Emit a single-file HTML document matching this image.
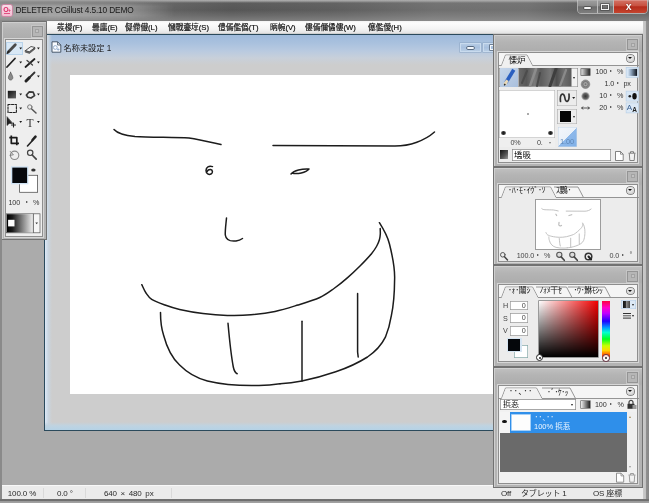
<!DOCTYPE html>
<html lang="ja">
<head>
<meta charset="utf-8">
<title>DELETER CGillust 4.5.10 DEMO</title>
<style>
html,body{margin:0;padding:0;}
body{will-change:transform;width:649px;height:503px;overflow:hidden;position:relative;background:#ababab;
 font-family:"Liberation Sans","Noto Sans CJK JP","Noto Sans CJK SC",sans-serif;font-size:8px;color:#222;}
.a{position:absolute;}
.t{position:absolute;white-space:nowrap;line-height:10px;}
/* window chrome */
#titlebar{left:0;top:0;width:649px;height:20.500px;
 background:linear-gradient(100deg,rgba(150,150,150,.55) 0,rgba(140,140,140,.35) 120px,rgba(120,120,120,0) 230px,rgba(150,150,150,.12) 330px,rgba(165,165,165,.32) 430px,rgba(165,165,165,.34) 520px,rgba(140,140,140,.15) 580px,rgba(140,140,140,.2) 649px),linear-gradient(180deg,#b6b6b6 0px,#8e8e8e 1.5px,#5c5c5c 3px,#565656 10px,#6a6a6a 16px,#7c7c7c 20.500px);}
#titleglow{left:0px;top:1.500px;width:200px;height:18px;
 background:linear-gradient(180deg,rgba(120,120,120,.0) 0,rgba(255,255,255,0) 20%,rgba(255,255,255,0) 80%,rgba(120,120,120,.0) 100%),linear-gradient(90deg,rgba(205,205,205,.42) 0,rgba(208,208,208,.5) 60px,rgba(205,205,205,.42) 125px,rgba(190,190,190,0) 175px);
 -webkit-mask-image:linear-gradient(180deg,rgba(0,0,0,.2) 0,#000 25%,#000 75%,rgba(0,0,0,.3) 100%);mask-image:linear-gradient(180deg,rgba(0,0,0,.2) 0,#000 25%,#000 75%,rgba(0,0,0,.3) 100%);}
#frameL{left:0;top:21px;width:2px;height:482px;background:#8a8a8a;}
#frameR{left:642.500px;top:20.500px;width:6.500px;height:483px;background:linear-gradient(90deg,#cacaca 0,#c2c2c2 2.500px,#8f8f8f 3.300px,#868686 6.500px);}
#frameB{left:0;top:499px;width:649px;height:4px;background:linear-gradient(180deg,#727272 0,#6e6e6e 1.800px,#9a9a9a 2.400px,#a4a4a4 4px);}
#menubar{left:2px;top:20.500px;width:640.500px;height:13.500px;background:linear-gradient(180deg,#f2f2f2 0,#fdfdfd 2px,#f4f4f4 8px,#e4e4e4 12px,#a8a8a8 13.500px);}
#menubar .t{top:2px;font-size:7.700px;color:#0a0a0a;-webkit-text-stroke:.2px #222;}
#statusbar{left:2px;top:485px;width:642px;height:14px;background:#ebebeb;border-top:1px solid #f8f8f8;box-sizing:border-box;}
#statusbar .t{top:2.500px;color:#2a2a2a;font-size:8px;letter-spacing:-.15px;}
.sep{position:absolute;top:2px;width:1px;height:10px;background:#d9d9d9;}
/* document window */
#doc{left:44px;top:34px;width:460px;height:397px;box-sizing:border-box;border:1px solid #2b4a5c;background:#cdcdcd;}
#doctitle{left:0;top:0;width:458px;height:40px;background:linear-gradient(180deg,#9fbadb 0,#a9c1de 8px,#b9cae0 16px,#c8d0da 23px,#cdcdcd 30px);}
#docL{left:0;top:0;width:7px;height:395px;background:linear-gradient(90deg,#dfeaf6 0,#d3e0ee 1.500px,#cad5df 3.500px,rgba(205,205,205,0) 7px);}
#docB{left:0;top:387px;width:458px;height:8px;background:linear-gradient(180deg,rgba(205,205,205,0) 0,#c0d3e0 45%,#b5d2e6 100%);}
#canvas{left:25px;top:39.800px;width:430px;height:319px;background:#fff;}
/* floating panels */
.panel{position:absolute;box-sizing:border-box;background:linear-gradient(180deg,#c2c2c2 0,#b4b4b4 8px,#adadad 17px,#b3b3b3 19px,#b3b3b3 100%);box-shadow:inset 0 0 0 1px #727272, inset 1px 1px 0 1px #cfcfcf;}
.pbtn{position:absolute;width:11px;height:11px;border:1px solid #949494;box-shadow:0 0 0 1px #c6c6c6;background:#b6b6b6;box-sizing:border-box;}
.pbtn:after{content:"";position:absolute;left:2.500px;top:2.500px;width:4px;height:4px;border:1px solid #a2a2a2;background:#c2c2c2;box-sizing:border-box;}
.inner{position:absolute;box-sizing:border-box;background:#ececec;box-shadow:inset 0 0 0 1px #8e8e8e, 0 0 0 1px #d6d6d6;}
.tabs{position:absolute;left:1px;top:1px;height:12.5px;background:#f5f5f5;}
.num{position:absolute;white-space:nowrap;line-height:10px;font-size:7.200px;color:#333;letter-spacing:-.15px;}
.r{text-align:right;}
.tri{position:absolute;width:0;height:0;border-left:2.5px solid #333;border-top:1.75px solid transparent;border-bottom:1.75px solid transparent;}
.dd{position:absolute;width:0;height:0;border-top:2.2px solid #222;border-left:1.8px solid transparent;border-right:1.8px solid transparent;}
.circ{position:absolute;width:6.500px;height:6.500px;border-radius:50%;background:radial-gradient(circle at 45% 40%,#f2f2f2 0,#d8d8d8 60%,#9c9c9c 100%);box-shadow:0 0 0 .8px #666;}
.circ:after{content:"";position:absolute;left:1.250px;top:2.200px;width:0;height:0;border-top:2.600px solid #0a0a0a;border-left:2px solid transparent;border-right:2px solid transparent;}
.box{position:absolute;box-sizing:border-box;}

</style>
</head>
<body>
<div id="titlebar" class="a"></div>
<div id="titleglow" class="a"></div>
<div class="t" style="left:15.500px;top:4px;font-size:8.300px;line-height:12px;color:#1a1a1a;letter-spacing:-0.15px;">DELETER CGillust 4.5.10 DEMO</div>
<!-- app icon -->
<div class="a" style="left:2.300px;top:5px;width:9.500px;height:10.500px;border-radius:1.500px;background:linear-gradient(180deg,#f8dce8,#f4bcd2);box-shadow:0 0 0 .7px #e080a8;"></div>
<div class="t" style="left:3.300px;top:4.500px;font-size:7px;line-height:10px;color:#dc2864;font-weight:bold;letter-spacing:-.6px;">O<span style="font-size:4.500px;">+</span></div>
<div class="a" style="left:3.800px;top:13px;width:6.500px;height:1.300px;background:#e0507f;"></div>
<!-- window buttons -->
<div class="a" style="left:578px;top:0;width:68.500px;height:13px;border-radius:0 0 3.500px 3.500px;box-shadow:0 0 0 1px rgba(205,205,205,.7);overflow:hidden;">
 <div class="a" style="left:0;top:0;width:19.500px;height:13px;background:linear-gradient(180deg,#b4b4b4 0,#9a9a9a 1.500px,#8a8a8a 45%,#6c6c6c 52%,#7e7e7e 100%);border-right:1px solid #bcbcbc;box-sizing:border-box;"></div>
 <div class="a" style="left:19.500px;top:0;width:16px;height:13px;background:linear-gradient(180deg,#b4b4b4 0,#9a9a9a 1.500px,#8a8a8a 45%,#6c6c6c 52%,#7e7e7e 100%);border-right:1px solid #bcbcbc;box-sizing:border-box;"></div>
 <div class="a" style="left:35.500px;top:0;width:33px;height:13px;background:linear-gradient(180deg,#e0a098 0,#d06a5c 1.500px,#c8503f 45%,#b52b1b 52%,#c5452f 100%);"></div>
 <div class="a" style="left:5.500px;top:7px;width:7px;height:2.400px;background:#f4f4f4;border-radius:1px;box-shadow:0 0 0 .7px #4a4a4a;"></div>
 <div class="a" style="left:22.800px;top:4px;width:8px;height:6px;border:1.600px solid #f2f2f2;box-sizing:border-box;box-shadow:0 0 0 .7px #4a4a4a, inset 0 0 0 .6px #4a4a4a;"></div>
 <div class="t" style="left:47.800px;top:.5px;font-size:10.500px;line-height:11px;font-weight:bold;color:#fff;text-shadow:0 0 1.500px #501008;">x</div>
</div>
</div>

<div id="menubar" class="a">
 <div class="t" style="left:55px;">彂椶(F)</div>
 <div class="t" style="left:90px;">曇廤(E)</div>
 <div class="t" style="left:123px;">儗僀儎(L)</div>
 <div class="t" style="left:166px;">慖戰斖埻(S)</div>
 <div class="t" style="left:216px;">僼傿儖僞(T)</div>
 <div class="t" style="left:268px;">昞帵(V)</div>
 <div class="t" style="left:303px;">僂傿儞僪僂(W)</div>
 <div class="t" style="left:366px;">僿儖僾(H)</div>
</div>

<div id="doc" class="a">
 <div id="doctitle" class="a"></div>
 <div id="docL" class="a"></div>
 <div id="docB" class="a"></div>
 <div id="canvas" class="a"></div>
 <!-- doc icon -->
 <svg class="a" style="left:5.500px;top:6px;" width="11" height="12" viewBox="0 0 11 12">
  <path d="M1,.8 H6.600 L9.800,4 V11.200 H1 Z" fill="#f8fbff" stroke="#3a4a5c" stroke-width=".9"/>
  <path d="M6.600,.8 V4 H9.800" fill="none" stroke="#3a4a5c" stroke-width=".8"/>
  <circle cx="4.300" cy="6.500" r="1.900" fill="none" stroke="#8fa8c8" stroke-width=".9"/>
  <path d="M6,8.500 h2.500 M7.200,7.300 v2.500" stroke="#8fa8c8" stroke-width=".8"/>
 </svg>
 <!-- doc buttons -->
 <div class="a" style="left:415px;top:7.500px;width:20.500px;height:9.500px;box-sizing:border-box;border:1px solid #c9dbee;background:linear-gradient(180deg,#b5cbe4,#a8c0de 50%,#b8cde4);box-shadow:0 0 0 .6px #8fa8c6;"></div>
 <div class="a" style="left:422px;top:11.500px;width:7px;height:2.500px;background:#f4f8fc;border-radius:1px;box-shadow:0 0 0 .7px #3c4c60;"></div>
 <div class="a" style="left:438px;top:7.500px;width:20.500px;height:9.500px;box-sizing:border-box;border:1px solid #c9dbee;background:linear-gradient(180deg,#b5cbe4,#a8c0de 50%,#b8cde4);box-shadow:0 0 0 .6px #8fa8c6;"></div>
 <div class="a" style="left:444.500px;top:9.500px;width:7px;height:5.500px;box-sizing:border-box;border:1.300px solid #f4f8fc;box-shadow:0 0 0 .6px #3c4c60;"></div>
 <div class="t" style="left:18.500px;top:8px;font-size:8.200px;line-height:11px;color:#1c1c1c;">名称未設定 1</div>
</div>


<svg class="a" style="left:0;top:0;" width="649" height="503" viewBox="0 0 649 503" fill="none" stroke="#1c1c1c" stroke-width="1.500" stroke-linecap="round" stroke-linejoin="round">
 <path d="M114,129.5 C118,134 125,135.5 135,136.5 C150,137.6 175,137 189,138 C200,139.5 212,142.5 221,144.5"/>
 <path d="M273,145.5 L395,146 C410,146 425,140.5 434.5,132"/>
 <path d="M212.5,166.6 C209,165.5 206,167 206,170.5 C206,174 209,175 211,174 C213,173 213,170 210.5,169.6 C209,169.5 207.5,170.5 207,171.6"/>
 <path d="M291,174 C294,170.5 302,168.5 309,169 C306,172.6 297,174.5 292,173"/>
 <path d="M226.5,218 C226,224 225,230 225.3,235 C226,240 231,241.5 236,241 C239,240.5 241,239.5 242.5,238.5"/>
 <path d="M141.8,284.7 C142.5,286.1 144.3,290.6 146.0,293.0 C147.7,295.4 148.5,297.4 151.7,299.4 C154.9,301.4 160.3,303.3 165.0,305.0 C169.7,306.7 173.3,308.0 179.6,309.4 C185.9,310.8 195.1,312.5 203.0,313.5 C210.9,314.5 219.3,315.2 227.3,315.4 C235.3,315.6 243.1,315.5 251.0,314.8 C258.9,314.1 267.2,313.0 275.0,311.4 C282.8,309.8 290.5,307.3 298.0,305.0 C305.5,302.7 313.8,300.2 319.8,297.5 C325.8,294.8 329.4,291.8 334.0,288.5 C338.6,285.2 343.3,281.4 347.6,277.6 C351.9,273.9 356.0,270.0 360.0,266.0 C364.0,262.0 368.8,256.9 371.5,253.7 C374.2,250.4 375.2,248.8 376.5,246.5 C377.8,244.2 378.8,241.9 379.4,239.8 C380.0,237.7 380.2,235.9 380.3,234.0 C380.4,232.1 380.2,229.5 380.2,228.6"/>
 <path d="M379.4,222.7 C384,230 388,238 389.4,243.8 C393,258 395,270 394.6,279.6 C394.5,295 393,308 391.4,315.4 C390,324 388,331 385.4,337.2 C381,346 375,352 367.5,357 C358,363 347,368 335.7,371.8 C325,375.5 312,379 301.9,381 C295,382.5 287,383.5 280,383.8"/>
 <path d="M160.5,312.6 C160.5,322 161.5,329 163.6,335.2 C167,348 172,358 179.6,365 C187,372.5 196,378 207.4,381 C222,384.5 240,386 259,385.5 C268,385.3 275,384.5 280,383.8"/>
 <path d="M228,323.3 C229.5,340 231,355 233.3,367 C234,370.5 235.5,373 237.2,373.8"/>
 <path d="M302,321.3 L302,381"/>
 <path d="M357.6,293.5 L357.6,352 L358.2,357"/>
</svg>

<div id="statusbar" class="a">
 <div class="t" style="left:5.800px;">100.0 %</div>
 <div class="sep" style="left:41px;"></div>
 <div class="t" style="left:55px;">0.0 °</div>
 <div class="sep" style="left:83px;"></div>
 <div class="t" style="left:102px;word-spacing:1.600px;">640 × 480 px</div>
 <div class="sep" style="left:168.500px;"></div>
 <div class="t" style="left:499px;">Off</div>
 <div class="t" style="left:519px;">タブレット 1</div>
 <div class="t" style="left:591px;">OS 座標</div>
</div>


<!-- TOOL PANEL -->
<div class="panel" style="left:1px;top:21px;width:45.5px;height:219px;">
 <div class="pbtn" style="left:30.5px;top:4.5px;"></div>
 <div class="inner" style="left:3.5px;top:18px;width:38.5px;height:197.5px;background:#eeeeee;">
  <div class="box" style="left:1.5px;top:2.5px;width:17px;height:13.5px;background:#d9e8f5;box-shadow:inset 0 0 0 1px #b9d3ea;"></div>
 </div>
 <svg class="a" style="left:0;top:0;" width="46" height="219" viewBox="1 21 46 219">
  <g stroke="#222" fill="none" stroke-linecap="round" stroke-linejoin="round">
   <!-- row1 pen / eraser -->
   <path d="M8.300,52 L15.300,44.800" stroke-width="2.800" stroke="#4a4a4a"/><path d="M7.200,53.200 L9,51.300" stroke-width="1.400" stroke="#222"/>
   
   <path d="M25.5,50.5 L31,46.5 L35,47.5 L29.5,51.8 Z" fill="#f4f4f4" stroke="#444" stroke-width=".9"/>
   <path d="M25.500,50.500 L29.500,51.800 L35,47.500 L35,49 L29.500,53.400 L25.500,52.200 Z" fill="#666" stroke="#444" stroke-width=".6"/>
   <!-- row2 line / airbrush -->
   <path d="M7,67 L15,58.5" stroke-width="1.8" stroke="#222"/>
   <path d="M25.5,67 L34.5,59" stroke-width="1.8" stroke="#222"/>
   <path d="M27,60.5 L32.5,65" stroke-width="1.3" stroke="#444"/>
   <!-- row3 drop / brush -->
   <path d="M10.600,72.300 C9.400,74.800 8.400,76.300 8.400,77.600 C8.400,79.100 9.400,80 10.600,80 C11.800,80 12.800,79.100 12.800,77.600 C12.800,76.300 11.800,74.800 10.600,72.300 Z" fill="#8a8a8a" stroke="#555" stroke-width=".7"/>
   <path d="M26,81 L29.5,77.5" stroke-width="3" stroke="#222"/>
   <path d="M30,77 L34.5,72.5" stroke-width="1.8" stroke="#333"/>
   <!-- row5 marquee / wand -->
   <rect x="8" y="104.500" width="8.400" height="8" stroke="#222" stroke-width="1.100" stroke-dasharray="2.200 1.300"/>
   <circle cx="29.800" cy="107" r="2.200" stroke="#777" stroke-width="1"/>
   <path d="M31.700,109 L36,113" stroke-width="1.500" stroke="#555"/>
   <!-- row6 move -->
   <path d="M7,117 L7,125.5 L9.2,123.4 L12.5,123.4 Z" fill="#222" stroke="#222" stroke-width=".6"/>
   <path d="M13.5,123 L13.5,127 M11.5,125 L15.5,125" stroke-width="1.1"/>
   <!-- row7 crop / eyedropper -->
   <path d="M11.300,135.500 L11.300,143.300 L19,143.300 M9.300,137.600 L16.800,137.600 L16.800,145.300" stroke-width="1.700" stroke="#1a1a1a" stroke-linecap="butt"/>
   <path d="M27.5,146 L32.5,140.5" stroke-width="1.6" stroke="#222"/>
   <path d="M32.5,140 L35.5,136.600" stroke-width="2.6" stroke="#222"/>
   <!-- row8 rotate / zoom -->
   <circle cx="14.600" cy="155.300" r="4.200" stroke="#8a8a8a" stroke-width="1.100"/>
   <path d="M10.300,151.500 L13.400,154.800 L10,155.300" stroke="#777" stroke-width=".9"/>
   <circle cx="30.2" cy="152.8" r="2.7" stroke="#444" stroke-width="1.2"/>
   <path d="M32.2,155 L36.2,159.200" stroke-width="1.7" stroke="#444"/>
  </g>
  <!-- row4 gradient square / polygon -->
  <defs>
   <linearGradient id="gsq" x1="0" y1="0" x2="1" y2="1"><stop offset="0" stop-color="#111"/><stop offset="1" stop-color="#666"/></linearGradient>
   <linearGradient id="gbar" x1="0" y1="0" x2="1" y2="0"><stop offset="0" stop-color="#000"/><stop offset=".2" stop-color="#1a1a1a"/><stop offset="1" stop-color="#f4f4f4"/></linearGradient>
  </defs>
  <rect x="7.800" y="90.800" width="8.200" height="7.600" fill="url(#gsq)"/>
  <path d="M26.400,95 L29.300,91.800 L33.200,92.200 L34.600,95.600 L31,98 L27.800,97.200 Z" fill="none" stroke="#3a3a3a" stroke-width="1.700" stroke-linejoin="round"/>
  <!-- T -->
  <text x="26.5" y="126.500" font-family="Liberation Serif, serif" font-size="11.5" fill="#333">T</text>
  <!-- small arrows -->
  <g fill="#1c1c1c">
   <path d="M19.3,47.6 h2.800 l-1.400,1.900 z M37,47.6 h2.800 l-1.400,1.900 z"/>
   <path d="M19.3,61.5 h2.800 l-1.400,1.900 z M37,61.500 h2.800 l-1.400,1.900 z"/>
   <path d="M19.3,75.5 h2.800 l-1.400,1.900 z M37,75.500 h2.800 l-1.400,1.900 z"/>
   <path d="M19.3,93.600 h2.800 l-1.400,1.900 z M37,93.600 h2.800 l-1.400,1.900 z"/>
   <path d="M19.3,107.5 h2.800 l-1.400,1.900 z"/>
   <path d="M19.3,121 h2.800 l-1.400,1.900 z M37,121 h2.800 l-1.400,1.900 z"/>
  </g>
  <!-- color swatches -->
  <rect x="19.600" y="175.300" width="18" height="17" fill="#fff" stroke="#555" stroke-width=".8"/>
  <rect x="11" y="166.300" width="17.400" height="18" fill="#cfe2f3"/>
  <rect x="12.300" y="167.600" width="14.800" height="15.400" fill="#06080c"/>
  <ellipse cx="33.4" cy="170" rx="2.2" ry="1.500" fill="#333"/>
  <!-- gradient swatch -->
  <rect x="6.600" y="213.800" width="33.400" height="19" fill="#f6f6f6" stroke="#555" stroke-width=".7"/>
  <rect x="7" y="214.200" width="26.400" height="18.200" fill="url(#gbar)"/>
  <rect x="8.100" y="219.800" width="6.400" height="6.600" fill="#fff"/>
  <path d="M33.400,213.800 V232.800" stroke="#333" stroke-width=".7"/>
  <path d="M35.400,222.400 h2.600 l-1.300,1.800 z" fill="#333"/>
 </svg>
 <div class="num r" style="left:4px;top:177px;width:15px;">100</div>
 <div class="tri" style="left:25px;top:180.3px;"></div>
 <div class="num" style="left:32px;top:177px;">%</div>
</div>


<div class="a" style="left:493px;top:34px;width:149.500px;height:454px;background:#858585;"></div>
<!-- BRUSH PANEL -->
<div class="panel" style="left:493px;top:34px;width:149.5px;height:132.500px;">
 <div class="pbtn" style="left:134px;top:5px;"></div>
 <div class="inner" style="left:4.5px;top:17.5px;width:140.5px;height:111px;">
  <div class="tabs" style="width:138.5px;"></div>
  <svg class="a" style="left:0;top:0;" width="141" height="15" viewBox="0 0 141 15">
   <path d="M0,13.5 H3.5 L7.5,3 H29 L34.5,13.5 H141" fill="none" stroke="#8a8a8a" stroke-width=".9"/>
   <path d="M4,13.5 L7.8,3.5 H28.700 L34,13.5 V15 H3 Z" fill="#f0f0f0"/>
  </svg>
  <div class="t" style="left:11px;top:3px;font-size:8.5px;color:#111;">慄炉</div>
  <div class="circ" style="left:129.5px;top:3.5px;"></div>

  <!-- brush preview -->
  <div class="box" style="left:1.5px;top:16px;width:79px;height:19.5px;background:#f2f2f2;box-shadow:inset 0 0 0 .6px #888;"></div>
  <div class="box" style="left:2px;top:16.5px;width:18.5px;height:18.5px;background:linear-gradient(135deg,#c6d6ea,#a9bfdc);"></div>
  <svg class="a" style="left:2px;top:16.5px;" width="72" height="19" viewBox="0 0 72 19">
   <defs><linearGradient id="tex" x1="0" y1="0" x2="1" y2="0">
    <stop offset="0" stop-color="#6a6a6a"/><stop offset=".15" stop-color="#585858"/><stop offset=".3" stop-color="#7a7a7a"/><stop offset=".42" stop-color="#5c5c5c"/><stop offset=".6" stop-color="#787878"/><stop offset=".72" stop-color="#4e4e4e"/><stop offset=".85" stop-color="#6e6e6e"/><stop offset="1" stop-color="#5a5a5a"/></linearGradient></defs>
   <rect x="18.500" y="0" width="53" height="18.5" fill="url(#tex)"/>
   <g stroke-linecap="round" fill="none">
    <path d="M30,18 L36,1" stroke="#8c8c8c" stroke-width="2.5"/>
    <path d="M37,18 L40,5" stroke="#4a4a4a" stroke-width="2"/>
    <path d="M50,18 L56,1" stroke="#3e3e3e" stroke-width="3"/>
    <path d="M60,18 L66,2" stroke="#8a8a8a" stroke-width="2.2"/>
    <path d="M22,15 L27,3" stroke="#4c4c4c" stroke-width="2"/>
   </g>
   <path d="M6,14.500 L13.800,1.800" stroke="#2a5fc0" stroke-width="3.600" stroke-linecap="butt"/>
   <path d="M4.600,16.800 L7.400,12.200" stroke="#e8d9b8" stroke-width="3" stroke-linecap="butt"/>
   <path d="M4.300,17.300 L5.200,15.800" stroke="#222" stroke-width="1.400"/>
  </svg>
  <div class="dd" style="left:75.300px;top:25px;"></div>

  <!-- curve area -->
  <div class="box" style="left:1px;top:38.5px;width:56.5px;height:48px;background:#fff;box-shadow:inset 0 0 0 .5px #aaa;"></div>
  <div class="box" style="left:1px;top:86.500px;width:56.5px;height:9px;background:#efefef;"></div>
  <div class="box" style="left:3.800px;top:79px;width:4.600px;height:4.600px;border-radius:50%;background:radial-gradient(circle,#111 0,#333 45%,#aaa 100%);"></div>
  <div class="box" style="left:50.800px;top:79px;width:4.600px;height:4.600px;border-radius:50%;background:radial-gradient(circle,#111 0,#333 45%,#aaa 100%);"></div>
  <div class="box" style="left:29.500px;top:61.500px;width:1.500px;height:1.500px;background:#aaa;"></div>
  <div class="num" style="left:13px;top:86px;color:#444;">0%</div>
  <div class="num" style="left:39.500px;top:86px;color:#444;">0.</div>
  <div class="dd" style="left:51.500px;top:90px;transform:scale(.8);"></div>

  <!-- right small buttons -->
  <div class="box" style="left:59.500px;top:38.500px;width:20px;height:16px;background:#ececec;box-shadow:inset 0 0 0 .6px #aaa;"></div>
  <svg class="a" style="left:59.500px;top:38.500px;" width="20" height="16" viewBox="0 0 20 16">
   <path d="M3.500,11.500 C2.500,3 7,2 7.800,7.500 C8.600,13.500 12.800,12.500 12,4" fill="none" stroke="#333" stroke-width="1.700" stroke-linecap="round"/>
   <path d="M15.200,7 h3 l-1.500,2.100 z" fill="#222"/>
  </svg>
  <div class="box" style="left:59.500px;top:57px;width:20px;height:15.5px;background:#ececec;box-shadow:inset 0 0 0 .6px #aaa;"></div>
  <div class="box" style="left:62px;top:59.500px;width:11.500px;height:11px;background:#050505;"></div>
  <div class="dd" style="left:75.300px;top:64px;"></div>
  <div class="box" style="left:60px;top:75.500px;width:19.500px;height:19.500px;background:linear-gradient(135deg,#f4f7fb 0,#eaf1f9 49%,#8db8ea 50%,#7fb0e8 100%);box-shadow:inset 0 0 0 .5px #c5d5e5;"></div>
  <div class="num" style="left:62.500px;top:85.500px;color:#5f88b8;font-size:7.500px;">1.00</div>

  <!-- parameter rows -->
  <svg class="a" style="left:81px;top:14px;" width="60" height="50" viewBox="578.5 65.5 60 50">
   <defs>
    <linearGradient id="g1" x1="0" y1="0" x2="1" y2="0"><stop offset="0" stop-color="#e8e8e8"/><stop offset="1" stop-color="#222"/></linearGradient>
    <radialGradient id="g2"><stop offset="0" stop-color="#666"/><stop offset=".35" stop-color="#aaa"/><stop offset=".6" stop-color="#777"/><stop offset="1" stop-color="#999"/></radialGradient>
    <radialGradient id="g3"><stop offset="0" stop-color="#333"/><stop offset=".6" stop-color="#666"/><stop offset="1" stop-color="#ececec"/></radialGradient>
    <linearGradient id="g4" x1="0" y1="0" x2="1" y2="0"><stop offset="0" stop-color="#cfe0f2"/><stop offset=".35" stop-color="#8aa0b8"/><stop offset="1" stop-color="#0a0f18"/></linearGradient>
   </defs>
   <rect x="580.4" y="68.200" width="9.200" height="6.800" fill="url(#g1)" stroke="#555" stroke-width=".7"/>
   <circle cx="585" cy="83.700" r="4.300" fill="url(#g2)" stroke="#666" stroke-width=".5"/>
   <circle cx="585" cy="95.700" r="4.600" fill="url(#g3)"/>
   <path d="M581,107.500 H589 M581,107.500 l1.800,-1.300 M581,107.500 l1.800,1.300 M589,107.500 l-1.800,-1.300 M589,107.500 l-1.800,1.300" stroke="#333" stroke-width=".8" fill="none"/>
   <!-- right icons -->
   <rect x="625.600" y="66.800" width="12.400" height="10" fill="#d7e6f5" stroke="#b3cde6" stroke-width=".6"/>
   <rect x="627.600" y="68.400" width="9" height="7" fill="url(#g4)"/>
   <rect x="625.600" y="90.600" width="12.400" height="10" fill="#d7e6f5" stroke="#b3cde6" stroke-width=".6"/>
   <circle cx="629.300" cy="95.700" r="1.300" fill="#222"/><ellipse cx="634" cy="95.700" rx="2.200" ry="3.200" fill="#111"/>
   <rect x="625.600" y="102.400" width="12.400" height="10" fill="#dbe8f5" stroke="#b3cde6" stroke-width=".6"/>
   <text x="626.300" y="109.500" font-family="Liberation Sans, sans-serif" font-size="8" fill="#3a5f8f">A</text>
   <text x="631.800" y="111" font-family="Liberation Sans, sans-serif" font-size="6.500" fill="#222" font-weight="bold">A</text>
  </svg>
  <div class="num r" style="left:90px;top:15.500px;width:19.500px;">100</div><div class="tri" style="left:112.500px;top:18.800px;"></div><div class="num" style="left:119.500px;top:15.500px;">%</div>
  <div class="num r" style="left:97px;top:27.300px;width:19.500px;">1.0</div><div class="tri" style="left:119.500px;top:30.600px;"></div><div class="num" style="left:126px;top:27.300px;">px</div>
  <div class="num r" style="left:90px;top:39.300px;width:19.500px;">10</div><div class="tri" style="left:112.500px;top:42.600px;"></div><div class="num" style="left:119.500px;top:39.300px;">%</div>
  <div class="num r" style="left:90px;top:51.100px;width:19.500px;">20</div><div class="tri" style="left:112.500px;top:54.400px;"></div><div class="num" style="left:119.500px;top:51.100px;">%</div>

  <!-- name row -->
  <div class="box" style="left:2.500px;top:98.500px;width:8px;height:9px;background:linear-gradient(135deg,#111,#555 60%,#999);"></div>
  <div class="box" style="left:14px;top:97.500px;width:99px;height:12px;background:#fff;box-shadow:inset 0 0 0 .7px #8a8a8a;"></div>
  <div class="t" style="left:16.500px;top:98.500px;font-size:8.500px;color:#111;">墧昅</div>
  <svg class="a" style="left:116px;top:98px;" width="24" height="12" viewBox="0 0 24 12">
   <path d="M1.500,1.500 H6.500 L9.200,4.200 V10.500 H1.500 Z" fill="#fff" stroke="#666" stroke-width=".8"/>
   <path d="M6.500,1.500 V4.200 H9.200" fill="none" stroke="#666" stroke-width=".7"/>
   <path d="M14.500,3.200 H21.500 M16.500,3 V1.700 H19.500 V3 M15.300,3.500 L15.800,10.500 H20.200 L20.700,3.500" fill="#f2f2f2" stroke="#666" stroke-width=".8"/>
  </svg>
 </div>
</div>


<!-- NAVIGATOR PANEL -->
<div class="panel" style="left:493px;top:166.500px;width:149.5px;height:98.500px;">
 <div class="pbtn" style="left:134px;top:4px;"></div>
 <div class="inner" style="left:4.5px;top:17px;width:140.5px;height:78.500px;">
  <div class="tabs" style="width:138.5px;"></div>
  <svg class="a" style="left:0;top:0;" width="141" height="15" viewBox="0 0 141 15">
   <path d="M56,3 H80 L85.500,13.500" fill="none" stroke="#8a8a8a" stroke-width=".9"/>
   <path d="M0,13.500 H3.500 L7.500,3 H52.500 L58,13.500 H141" fill="none" stroke="#8a8a8a" stroke-width=".9"/>
   <path d="M4,13.500 L7.800,3.500 H52.200 L57.500,13.500 V15 H3 Z" fill="#ececec"/>
  </svg>
  <div class="t" style="left:10.500px;top:2.500px;font-size:8px;color:#111;letter-spacing:-.3px;">･ﾊ･ﾓ･ｲｳﾞ･ｿ</div>
  <div class="t" style="left:58.500px;top:2.500px;font-size:8px;color:#111;letter-spacing:-.3px;">ｽ鸚･</div>
  <div class="circ" style="left:129.500px;top:3.500px;"></div>
  <!-- preview -->
  <div class="box" style="left:37px;top:15.500px;width:66.500px;height:50.500px;background:#fff;box-shadow:inset 0 0 0 1px #9c9c9c;"></div>
  <svg class="a" style="left:37.500px;top:16px;" width="65.5" height="49.500" viewBox="70.5 74.5 425 319" fill="none" stroke="#bdbdbd" stroke-width="6" stroke-linecap="round">
   <path d="M114,129.5 C118,134 125,135.5 135,136.5 C150,137.6 175,137 189,138 C200,139.5 212,142.5 221,144.5"/>
   <path d="M273,145.5 L395,146 C410,146 425,140.5 434.5,132"/>
   <path d="M206,166 L211,174" stroke-width="8"/>
   <path d="M291,174 L309,169" stroke-width="8"/>
   <path d="M226.5,218 C226,224 225,230 225.3,235 C226,240 231,241.5 236,241 C239,240.5 241,239.5 242.5,238.5" stroke-width="8"/>
   <path d="M141.8,284.7 C142.5,286.1 144.3,290.6 146.0,293.0 C147.7,295.4 148.5,297.4 151.7,299.4 C154.9,301.4 160.3,303.3 165.0,305.0 C169.7,306.7 173.3,308.0 179.6,309.4 C185.9,310.8 195.1,312.5 203.0,313.5 C210.9,314.5 219.3,315.2 227.3,315.4 C235.3,315.6 243.1,315.5 251.0,314.8 C258.9,314.1 267.2,313.0 275.0,311.4 C282.8,309.8 290.5,307.3 298.0,305.0 C305.5,302.7 313.8,300.2 319.8,297.5 C325.8,294.8 329.4,291.8 334.0,288.5 C338.6,285.2 343.3,281.4 347.6,277.6 C351.9,273.9 356.0,270.0 360.0,266.0 C364.0,262.0 368.8,256.9 371.5,253.7 C374.2,250.4 375.2,248.8 376.5,246.5 C377.8,244.2 378.8,241.9 379.4,239.8 C380.0,237.7 380.2,235.9 380.3,234.0 C380.4,232.1 380.2,229.5 380.2,228.6"/>
   <path d="M379.4,222.7 C384,230 388,238 389.4,243.8 C393,258 395,270 394.6,279.6 C394.5,295 393,308 391.4,315.4 C390,324 388,331 385.4,337.2 C381,346 375,352 367.5,357 C358,363 347,368 335.7,371.8 C325,375.5 312,379 301.9,381 C295,382.5 287,383.5 280,383.8"/>
   <path d="M160.5,312.6 C160.5,322 161.5,329 163.6,335.2 C167,348 172,358 179.6,365 C187,372.5 196,378 207.4,381 C222,384.5 240,386 259,385.5 C268,385.3 275,384.5 280,383.8"/>
   <path d="M228,323.3 C229.5,340 231,355 233.3,367 C234,370.5 235.5,373 237.2,373.8"/>
   <path d="M302,321.3 L302,381"/>
   <path d="M357.6,293.5 L357.6,352 L358.2,357"/>
  </svg>
  <!-- bottom row -->
  <svg class="a" style="left:0;top:66px;" width="141" height="12" viewBox="497.5 249.500 141 12" fill="none" stroke-linecap="round">
   <circle cx="502.300" cy="254.300" r="2.300" stroke="#555" stroke-width="1"/><path d="M504,256.200 L507,259.500" stroke="#444" stroke-width="1.500"/>
   <circle cx="558.800" cy="254.300" r="2.600" stroke="#555" stroke-width="1.100" fill="#ddd"/><path d="M560.700,256.400 L563.800,259.800" stroke="#444" stroke-width="1.600"/>
   <circle cx="571.800" cy="254.300" r="2.600" stroke="#555" stroke-width="1.100" fill="#ddd"/><path d="M573.700,256.400 L576.800,259.800" stroke="#444" stroke-width="1.600"/>
   <circle cx="588" cy="256" r="3.300" stroke="#333" stroke-width="1.500"/><path d="M588,256 L590.600,259" stroke="#222" stroke-width="2"/>
  </svg>
  <div class="num r" style="left:16px;top:67.500px;width:20.500px;color:#444;">100.0</div><div class="tri" style="left:39.500px;top:70.800px;"></div><div class="num" style="left:46.500px;top:67.500px;color:#444;">%</div>
  <div class="num r" style="left:101px;top:67.500px;width:20.500px;color:#444;">0.0</div><div class="tri" style="left:124.500px;top:70.800px;"></div><div class="num" style="left:132px;top:66.500px;color:#444;">°</div>
 </div>
</div>

<!-- COLOR PANEL -->
<div class="panel" style="left:493px;top:265px;width:149.5px;height:101.500px;">
 <div class="pbtn" style="left:134px;top:5.500px;"></div>
 <div class="inner" style="left:4.5px;top:18.500px;width:140.5px;height:78.500px;">
  <div class="tabs" style="width:138.5px;"></div>
  <svg class="a" style="left:0;top:0;" width="141" height="15" viewBox="0 0 141 15">
   <path d="M70,3 H107 L112.500,13.500" fill="none" stroke="#8a8a8a" stroke-width=".9"/>
   <path d="M38,3 H68.500 L74,13.500" fill="none" stroke="#8a8a8a" stroke-width=".9"/>
   <path d="M0,13.500 H3.500 L7.500,3 H34.500 L40,13.500 H141" fill="none" stroke="#8a8a8a" stroke-width=".9"/>
   <path d="M4,13.500 L7.800,3.500 H34.200 L39.500,13.500 V15 H3 Z" fill="#ececec"/>
  </svg>
  <div class="t" style="left:10.500px;top:2.500px;font-size:8px;color:#111;letter-spacing:-.4px;">･ｫ･鬮ｼ</div>
  <div class="t" style="left:42px;top:2.500px;font-size:8px;color:#111;letter-spacing:-.4px;">ﾉｫﾒ干ｾ</div>
  <div class="t" style="left:76px;top:2.500px;font-size:8px;color:#111;letter-spacing:-.4px;">･ｳ･鮴ﾓｼｯ</div>
  <div class="circ" style="left:129.500px;top:4px;"></div>
  <!-- HSV -->
  <div class="num" style="left:5.500px;top:17px;color:#444;">H</div>
  <div class="num" style="left:5.500px;top:30px;color:#444;">S</div>
  <div class="num" style="left:5.500px;top:42.500px;color:#444;">V</div>
  <div class="box" style="left:12px;top:17px;width:18px;height:9.500px;background:#fff;box-shadow:inset 0 0 0 .7px #9a9a9a;"></div>
  <div class="box" style="left:12px;top:29.500px;width:18px;height:9.500px;background:#fff;box-shadow:inset 0 0 0 .7px #9a9a9a;"></div>
  <div class="box" style="left:12px;top:42.500px;width:18px;height:9.500px;background:#fff;box-shadow:inset 0 0 0 .7px #9a9a9a;"></div>
  <div class="num r" style="left:12px;top:17px;width:16px;color:#444;">0</div>
  <div class="num r" style="left:12px;top:29.500px;width:16px;color:#444;">0</div>
  <div class="num r" style="left:12px;top:42.500px;width:16px;color:#444;">0</div>
  <!-- swatches -->
  <div class="box" style="left:16.500px;top:61.500px;width:13.500px;height:13px;background:#fff;box-shadow:inset 0 0 0 .7px #8aa;"></div>
  <div class="box" style="left:9px;top:54.500px;width:15px;height:14px;background:#d5e4f2;"></div>
  <div class="box" style="left:10.200px;top:55.800px;width:12.600px;height:11.500px;background:#05070b;"></div>
  <!-- SV square -->
  <div class="box" style="left:41.500px;top:17px;width:58.500px;height:56.500px;background:linear-gradient(180deg,rgba(0,0,0,0) 0,#000 100%),linear-gradient(90deg,#fff 0,#f20000 100%);box-shadow:0 0 0 .7px #777;"></div>
  <div class="box" style="left:38.500px;top:70.500px;width:7px;height:7px;border-radius:50%;border:1.300px solid #222;background:#fff;"></div>
  <div class="box" style="left:41px;top:73px;width:2px;height:2px;border-radius:50%;background:#222;"></div>
  <!-- hue -->
  <div class="box" style="left:104px;top:17px;width:8.500px;height:56.500px;background:linear-gradient(180deg,#ff0040 0,#ff00c8 12%,#c000ff 22%,#2000ff 36%,#00a0ff 48%,#00ffd0 56%,#00ff20 68%,#c8ff00 80%,#ffd800 88%,#ff5a00 96%,#ff2000 100%);"></div>
  <div class="box" style="left:104.500px;top:70.500px;width:7.500px;height:7.500px;border-radius:50%;border:1.300px solid #5a2030;background:rgba(255,255,255,.85);"></div>
  <div class="box" style="left:107.300px;top:73.300px;width:2px;height:2px;border-radius:50%;background:#222;"></div>
  <!-- right icons -->
  <div class="box" style="left:123px;top:16px;width:15.500px;height:9.500px;background:#dce9f6;box-shadow:inset 0 0 0 .6px #b5cde5;"></div>
  <div class="box" style="left:125px;top:17.500px;width:7.500px;height:6.500px;background:linear-gradient(90deg,#111 0,#333 45%,#888 50%,#444 100%);"></div>
  <div class="dd" style="left:134px;top:20px;"></div>
  <div class="box" style="left:125px;top:29px;width:8px;height:1.600px;background:#333;box-shadow:0 2.300px 0 #555,0 4.600px 0 #333;"></div>
  <div class="dd" style="left:134px;top:31px;"></div>
 </div>
</div>

<!-- LAYER PANEL -->
<div class="panel" style="left:493px;top:366.500px;width:149.5px;height:121.500px;">
 <div class="pbtn" style="left:134px;top:5px;"></div>
 <div class="inner" style="left:4.5px;top:18px;width:140.5px;height:99.500px;background:#f1f1f1;">
  <div class="tabs" style="width:138.5px;"></div>
  <svg class="a" style="left:0;top:0;" width="141" height="15" viewBox="0 0 141 15">
   <path d="M44,3 H72 L77.500,13.500" fill="none" stroke="#8a8a8a" stroke-width=".9"/>
   <path d="M0,13.500 H3.500 L7.500,3 H38.500 L44,13.500 H141" fill="none" stroke="#8a8a8a" stroke-width=".9"/>
   <path d="M4,13.500 L7.800,3.500 H38.200 L43.500,13.500 V15 H3 Z" fill="#f1f1f1"/>
  </svg>
  <div class="t" style="left:11.500px;top:2.500px;font-size:8px;color:#222;letter-spacing:.8px;">･･､･･</div>
  <div class="t" style="left:49.500px;top:3px;font-size:8px;color:#222;letter-spacing:-.6px;">･ﾞ･ｹ･ｯ</div>
  <div class="circ" style="left:129.500px;top:3.500px;"></div>
  <!-- blend row -->
  <div class="box" style="left:2px;top:14.500px;width:76.500px;height:10.500px;background:#fff;box-shadow:inset 0 0 0 .7px #8a8a8a;"></div>
  <div class="t" style="left:5.500px;top:15px;font-size:8px;color:#111;">捠忢</div>
  <div class="dd" style="left:73px;top:19px;"></div>
  <div class="box" style="left:83.500px;top:16.500px;width:9px;height:6.500px;background:linear-gradient(90deg,#eee,#222);box-shadow:0 0 0 .6px #555;"></div>
  <div class="num r" style="left:92px;top:15px;width:17px;">100</div><div class="tri" style="left:112px;top:18.300px;"></div><div class="num" style="left:120px;top:15px;">%</div>
  <svg class="a" style="left:128.500px;top:14.500px;" width="11" height="11" viewBox="0 0 11 11">
   <path d="M3,5 V3.300 C3,.8 7,.8 7,3.300 V5" fill="none" stroke="#444" stroke-width="1.200"/>
   <rect x="1.500" y="4.800" width="7" height="5" fill="#333"/>
   <rect x="6.500" y="6" width="4" height="4" fill="#999"/>
  </svg>
  <!-- layer list -->
  <div class="box" style="left:2px;top:27px;width:136px;height:60px;background:#6a6a6a;"></div>
  <div class="box" style="left:2px;top:27px;width:10.500px;height:21.500px;background:#f4f4f4;"></div>
  <div class="box" style="left:12.500px;top:27px;width:116.500px;height:21.500px;background:#2f8fea;"></div>
  <div class="box" style="left:129px;top:27px;width:9.500px;height:60px;background:#efefef;"></div>
  <div class="box" style="left:4.800px;top:35px;width:5px;height:3.500px;border-radius:50%;background:#111;"></div>
  <div class="box" style="left:14.500px;top:30.500px;width:18px;height:14.500px;background:#fdfdfd;box-shadow:0 0 0 .8px #c4e0fa;"></div>
  <div class="t" style="left:37px;top:28px;font-size:7.500px;color:#e4f0ff;letter-spacing:.2px;">･･､･･</div>
  <div class="t" style="left:36.500px;top:37.500px;font-size:7.500px;color:#eef6ff;">100% 捠忢</div>
  <div class="dd" style="left:131.800px;top:31px;transform:rotate(180deg);border-top-color:#a08a5a;"></div>
  <div class="dd" style="left:131.800px;top:81px;border-top-color:#999;"></div>
  <!-- bottom row -->
  <svg class="a" style="left:116px;top:87.500px;" width="24" height="12" viewBox="0 0 24 12">
   <path d="M2.500,1.200 H7 L9.700,3.900 V10.200 H2.500 Z" fill="#fff" stroke="#777" stroke-width=".8"/>
   <path d="M7,1.200 V3.900 H9.700" fill="none" stroke="#777" stroke-width=".7"/>
   <path d="M14.500,3 H21.500 M16.500,2.800 V1.500 H19.500 V2.800 M15.300,3.300 L15.800,10.200 H20.200 L20.700,3.300" fill="#f2f2f2" stroke="#888" stroke-width=".8"/>
  </svg>
 </div>
</div>

<div id="frameL" class="a"></div>
<div id="frameR" class="a"></div>
<div id="frameB" class="a"></div>
</body>
</html>
